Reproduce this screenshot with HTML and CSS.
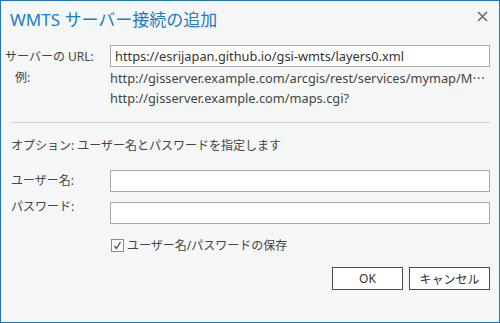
FILE: index.html
```
<!DOCTYPE html>
<html lang="ja">
  <head>
    <meta charset="UTF-8" />
    <title>WMTS サーバー接続の追加</title>
    <link rel="stylesheet" href="styles.css">
  </head>
  <body>
    <div class="dialog">
      <div class="title-bar">
        <h1>WMTS サーバー接続の追加</h1>
        <span class="close">
          <svg width="11" height="11" viewBox="0 0 11 11"><path d="M1 1L10 10M10 1L1 10" stroke="#6b6b6b" stroke-width="1.6" fill="none"/></svg>
        </span>
      </div>

      <div class="row url-row">
        <label class="label-url" for="url">サーバーの URL:</label>
        <input type="text" id="url" value="https://esrijapan.github.io/gsi-wmts/layers0.xml" />
      </div>

      <div class="row example-row">
        <span class="label-ex">例:</span>
        <div class="examples">
          <div class="ex-line">http://gisserver.example.com/arcgis/rest/services/mymap/M⋯</div>
          <div class="ex-line">http://gisserver.example.com/maps.cgi?</div>
        </div>
      </div>

      <hr class="divider" />

      <p class="options">オプション: ユーザー名とパスワードを指定します</p>

      <div class="row field-row">
        <label for="user">ユーザー名:</label>
        <input type="text" id="user" />
      </div>
      <div class="row field-row">
        <label class="label-pass" for="pass">パスワード:</label>
        <input type="password" id="pass" />
      </div>

      <div class="save-row">
        <span class="check">
          <svg width="9" height="9" viewBox="0 0 9 9"><path d="M1.5 5L3.5 7.5L7.5 1" stroke="#555" stroke-width="1.4" fill="none"/></svg>
        </span>
        <span>ユーザー名/パスワードの保存</span>
      </div>

      <div class="buttons">
        <button class="btn btn-ok">OK</button>
        <button class="btn btn-cancel">キャンセル</button>
      </div>
    </div>
  </body>
</html>
```

FILE: styles.css
```
body {
  margin: 0;
  font-family: "Noto Sans", "Noto Sans CJK JP", sans-serif;
  font-size: 12px;
  color: #444;
}

.dialog {
  width: 500px;
  height: 323px;
  box-sizing: border-box;
  border: 1px solid #1e73be;
  background-color: #f5f7f7;
  padding: 0 9px 0 4px;
}

.title-bar {
  display: flex;
  justify-content: space-between;
  align-items: center;
  height: 34px;
  padding-left: 5px;
}

.title-bar h1 {
  margin: 0;
  font-size: 17px;
  font-weight: normal;
  color: #1c7cc9;
}

.close {
  display: flex;
  margin-right: 2px;
  margin-top: -4px;
}

.row {
  display: flex;
  align-items: center;
}

.row label {
  width: 105px;
  flex-shrink: 0;
}

.row input {
  flex: 1;
  height: 22px;
  box-sizing: border-box;
  border: 1px solid #a9a9a9;
  background: #fff;
  font-family: inherit;
  font-size: 12.8px;
  color: #333;
  padding: 0 4px;
}

.url-row {
  margin-top: 10px;
}

.example-row {
  align-items: flex-start;
  margin-top: 1px;
}

.label-ex {
  width: 105px;
  flex-shrink: 0;
  padding-left: 10px;
  box-sizing: border-box;
  line-height: 20px;
}

.ex-line {
  font-size: 12.8px;
  line-height: 20px;
  white-space: nowrap;
}

.divider {
  border: 0;
  border-top: 1px solid #cfd1d1;
  margin: 14px 0 0 6px;
}

.options {
  margin: 13px 0 0 6px;
  line-height: 20px;
}

.field-row {
  margin-top: 14px;
  align-items: flex-start;
}

.field-row label {
  padding: 2px 0 0 6px;
  box-sizing: border-box;
  line-height: 18px;
}

.field-row .label-pass {
  padding-top: 0;
  margin-top: -4px;
}

.field-row + .field-row {
  margin-top: 10px;
}

.save-row {
  display: flex;
  align-items: center;
  margin: 12px 0 0 106px;
  gap: 3px;
}

.check {
  width: 11px;
  height: 11px;
  border: 1px solid #8a8a8a;
  background: #fff;
  display: flex;
  align-items: center;
  justify-content: center;
}

.buttons {
  display: flex;
  justify-content: flex-end;
  gap: 6px;
  margin-top: 13px;
}

.btn {
  height: 23px;
  border: 1px solid #4a4a4a;
  background: #fff;
  font-family: inherit;
  font-size: 12px;
  color: #333;
  padding: 0;
}

.btn-ok {
  width: 71px;
}

.btn-cancel {
  width: 81px;
}
```
